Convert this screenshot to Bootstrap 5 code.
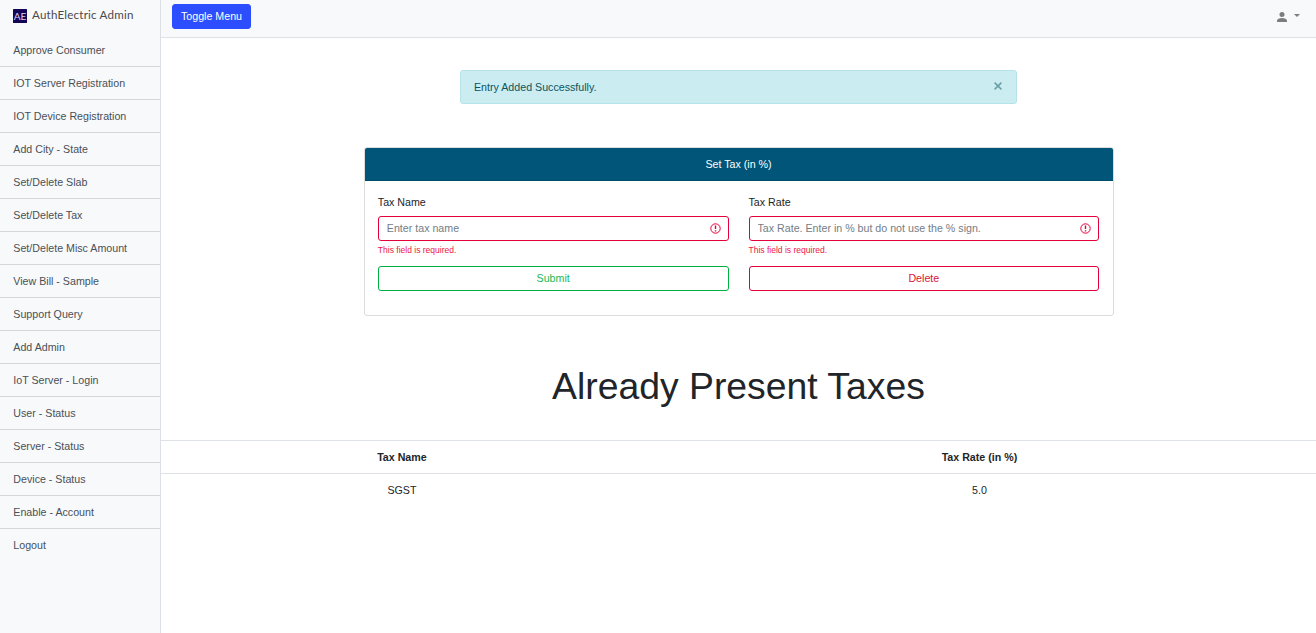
<!DOCTYPE html>
<html lang="en">
<head>
<meta charset="utf-8">
<meta name="viewport" content="width=device-width, initial-scale=1">
<title>AuthElectric Admin</title>
<link href="https://cdn.jsdelivr.net/npm/bootstrap@5.3.0/dist/css/bootstrap.min.css" rel="stylesheet">
<style>
html { font-size: 10.6667px; }
body { font-family: "Liberation Sans", Arial, sans-serif; color: #212529; overflow: hidden; }
.side-menu { width: 161px; background: #f8f9fb; border-right: 1px solid #dcdfe3; }
.brand { height: 34px; padding: 0 0 3px 13px; }
.brand-name { font-family: Lato, sans-serif; font-size: 11.6px; color: #4a4a4a; letter-spacing: .2px; margin: 0 0 2px 5px; }
.side-menu .list-group-item { height: 33px; padding: 0 13.33px; line-height: 32px; background: transparent; color: #495057; border-color: #d4d7da; }
.top-bar { height: 38px; padding: 0 16px 5px 11px; background: #f8f9fb; border-bottom: 1px solid #dee2e6; }
.btn { border-radius: 3px; font-size: 1rem; height: 25px; padding: 0 8px; line-height: 23px; }
.btn-menu { --bs-btn-bg: #2c4eff; --bs-btn-border-color: #2c4eff; --bs-btn-color: #fff; }
.user-link { color: #7b7d7f; gap: 7px; padding-top: 1px; }
.notice { width: 557px; height: 34px; margin: 32px auto 0; padding: 0 14px 0 13px; background: #cbecf0; border: 1px solid #b4e4ea; color: #0c545f; border-radius: 3px; }
.notice svg { margin-bottom: 2px; }
.tax-card { width: 750px; height: 169px; margin: 43px auto 0; border-color: #dcdcdd; border-radius: 3px; }
.tax-card .card-header { height: 33px; padding: 0; line-height: 33px; background: #005578; border-bottom: 1px solid #004c6b; color: #fff; border-radius: 2px 2px 0 0; }
.tax-card .card-body { padding: 13px 13.33px; }
.fields { --bs-gutter-x: 20px; }
.form-label { margin: 0 0 6px; line-height: 16px; display: block; }
.form-control { height: 25px; padding: 0 8px 1px; font-size: 1rem; border: 1px solid #e4003a; border-radius: 3px; }
.form-control::placeholder { color: #747d86; }
.field-icon { top: 6.5px; right: 7.8px; }
.field-error { color: #ee1548; font-size: 8.533px; line-height: 13px; margin: 3px 0 9px; }
.btn-submit { --bs-btn-color: #19b954; --bs-btn-border-color: #00b140; }
.btn-remove { --bs-btn-color: #dc0f38; --bs-btn-border-color: #e4003a; }
.page-heading { font-size: 37.333px; font-weight: 400; line-height: 44px; margin: 48px 0 32px; }
.table th, .table td { height: 33px; padding: 0; text-align: center; vertical-align: middle; border: 0; }
.table th { border-top: 1px solid #dee2e6; border-bottom: 1px solid #dee2e6; }
</style>
</head>
<body>
<div class="d-flex vh-100">
  <aside class="side-menu flex-shrink-0">
    <div class="brand d-flex align-items-center">
      <svg width="14" height="14" viewBox="0 0 14 14"><rect width="14" height="14" rx=".5" fill="#150558"/><text x="7" y="10.800" text-anchor="middle" font-family="Lato, sans-serif" font-size="10" fill="#d7d3ef">AE</text></svg>
      <span class="brand-name text-nowrap">AuthElectric Admin</span>
    </div>
    <nav class="list-group list-group-flush">
      <a href="#" class="list-group-item">Approve Consumer</a>
      <a href="#" class="list-group-item">IOT Server Registration</a>
      <a href="#" class="list-group-item">IOT Device Registration</a>
      <a href="#" class="list-group-item">Add City - State</a>
      <a href="#" class="list-group-item">Set/Delete Slab</a>
      <a href="#" class="list-group-item">Set/Delete Tax</a>
      <a href="#" class="list-group-item">Set/Delete Misc Amount</a>
      <a href="#" class="list-group-item">View Bill - Sample</a>
      <a href="#" class="list-group-item">Support Query</a>
      <a href="#" class="list-group-item">Add Admin</a>
      <a href="#" class="list-group-item">IoT Server - Login</a>
      <a href="#" class="list-group-item">User - Status</a>
      <a href="#" class="list-group-item">Server - Status</a>
      <a href="#" class="list-group-item">Device - Status</a>
      <a href="#" class="list-group-item">Enable - Account</a>
      <a href="#" class="list-group-item">Logout</a>
    </nav>
  </aside>
  <main class="flex-grow-1">
    <header class="top-bar d-flex align-items-center justify-content-between">
      <button class="btn btn-menu" type="button">Toggle Menu</button>
      <a href="#" class="user-link d-flex" aria-label="Account">
        <svg width="10" height="10" viewBox="0 0 10 10" fill="currentColor"><circle cx="5" cy="2.6" r="2.5"/><path d="M0 10V8.700C0 6.900 2.500 6 5 6s5 .9 5 2.700V10z"/></svg>
        <svg width="6" height="10" viewBox="0 0 6 10" fill="currentColor"><path d="M0 2h6L3 5z"/></svg>
      </a>
    </header>
    <div class="notice d-flex align-items-center justify-content-between" role="alert">
      <span>Entry Added Successfully.</span>
      <svg width="8" height="8" viewBox="0 0 8 8" stroke="#689fa6" stroke-width="1.5"><path d="M.6.6l6.800 6.800M7.400.6L.6 7.400"/></svg>
    </div>
    <section class="card tax-card">
      <div class="card-header text-center">Set Tax (in %)</div>
      <div class="card-body">
        <div class="row fields">
          <div class="col-6">
            <label class="form-label" for="taxName">Tax Name</label>
            <div class="position-relative">
              <input class="form-control" id="taxName" placeholder="Enter tax name">
              <svg class="field-icon position-absolute" width="11" height="11" viewBox="0 0 11 11" fill="none" stroke="#e4003a"><circle cx="5.500" cy="5.500" r="4.700" stroke-width="1"/><path d="M5.500 2.600v3.500M5.500 7.200v1.300" stroke-width="1.400"/></svg>
            </div>
            <div class="field-error">This field is required.</div>
            <button class="btn btn-submit w-100" type="button">Submit</button>
          </div>
          <div class="col-6">
            <label class="form-label" for="taxRate">Tax Rate</label>
            <div class="position-relative">
              <input class="form-control" id="taxRate" placeholder="Tax Rate. Enter in % but do not use the % sign.">
              <svg class="field-icon position-absolute" width="11" height="11" viewBox="0 0 11 11" fill="none" stroke="#e4003a"><circle cx="5.500" cy="5.500" r="4.700" stroke-width="1"/><path d="M5.500 2.600v3.500M5.500 7.200v1.300" stroke-width="1.400"/></svg>
            </div>
            <div class="field-error">This field is required.</div>
            <button class="btn btn-remove w-100" type="button">Delete</button>
          </div>
        </div>
      </div>
    </section>
    <h1 class="page-heading text-center">Already Present Taxes</h1>
    <table class="table mb-0">
      <colgroup><col style="width:41.72%"><col></colgroup>
      <thead><tr><th>Tax Name</th><th>Tax Rate (in %)</th></tr></thead>
      <tbody><tr><td>SGST</td><td>5.0</td></tr></tbody>
    </table>
  </main>
</div>
<script src="https://cdn.jsdelivr.net/npm/bootstrap@5.3.0/dist/js/bootstrap.bundle.min.js"></script>
</body>
</html>
